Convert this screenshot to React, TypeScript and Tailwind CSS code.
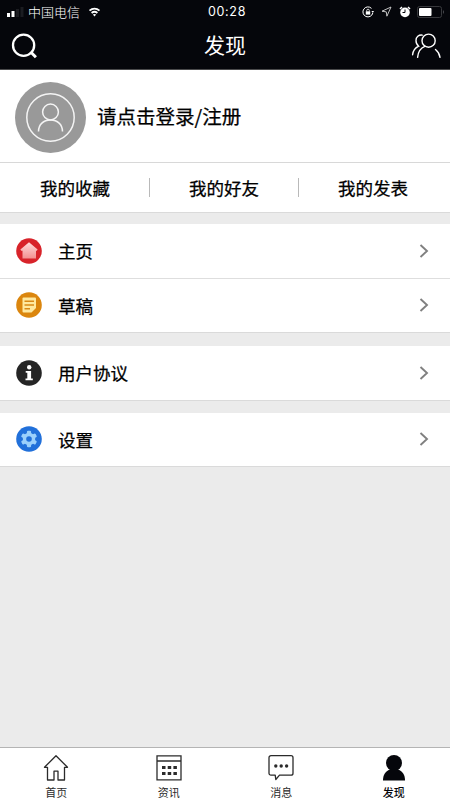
import type { ReactNode } from "react";

const shortcuts = ["我的收藏", "我的好友", "我的发表"];

const tabs = [
    { label: "首页", icon: <HomeIcon />, active: false },
    { label: "资讯", icon: <NewsIcon />, active: false },
    { label: "消息", icon: <MessageIcon />, active: false },
    { label: "发现", icon: <PersonIcon />, active: true },
];

export default function App() {
    return (
        <div className="flex h-screen w-full flex-col bg-[#ebebeb] font-['Noto_Sans_CJK_SC',sans-serif] text-black">
            <header className="h-[70px] shrink-0 border-b border-[#4a4a4c] bg-[#05060b] text-white">
                <StatusBar />
                <div className="flex h-[46px] items-center justify-between pr-[9px] pl-[11px]">
                    <svg className="h-[28px] w-[28px]" viewBox="0 0 28 28" fill="none" stroke="currentColor" strokeWidth="2.3">
                        <circle cx="12.6" cy="13.3" r="10.6" />
                        <path d="M19.500 19.800l5.400 5.400" strokeWidth="3" />
                    </svg>
                    <h1 className="pb-[3px] text-[21px] leading-none">发现</h1>
                    <svg className="h-[28px] w-[30px]" viewBox="0 0 30 28" fill="none" stroke="currentColor" strokeWidth="1.4" strokeLinecap="round">
                        <circle cx="17.600" cy="8.700" r="6.600" />
                        <path d="M11.300 3.100C7.700 2.700 5 5 5 8.400c0 2.500.9 4.400 2.700 5.800C4.500 15.700 2 18.800 1.600 22.800" />
                        <path d="M13.800 14.400C10 15.800 7.200 19.800 6.600 25.300" />
                        <path d="M24.500 17.500c2.300 1.800 4 4.700 4.500 7.800" />
                    </svg>
                </div>
            </header>

            <section className="border-b border-[#dadada] bg-white">
                <div className="flex h-[93px] items-center border-b border-[#d8d8d8] pt-[3px] pl-[15px]">
                    <svg className="h-[71px] w-[71px]" viewBox="0 0 71 71" fill="none" stroke="#f4f4f4" strokeWidth="1.500">
                        <circle cx="35.500" cy="35.500" r="35.500" fill="#999999" stroke="none" />
                        <circle cx="35.500" cy="35.500" r="23.700" />
                        <circle cx="35.500" cy="30" r="7.900" />
                        <path d="M23.500 49.500c0-7 5-11.500 12-11.500s12 4.500 12 11.500" />
                    </svg>
                    <span className="ml-[11px] pb-[4px] text-[19.500px] leading-none [-webkit-text-stroke:0.25px_black]">请点击登录/注册</span>
                </div>
                <div className="grid h-[49px] grid-cols-[149px_149px_149px] items-center">
                    {shortcuts.map((label) => (
                        <div
                            key={label}
                            className="flex h-[19px] items-center justify-center border-l border-[#b9b9b9] text-[17.500px] leading-none [-webkit-text-stroke:0.25px_black] first:border-transparent"
                        >
                            {label}
                        </div>
                    ))}
                </div>
            </section>

            <MenuGroup className="mt-[11px]">
                <MenuRow label="主页" icon={<RedHouse />} />
                <MenuRow label="草稿" icon={<DraftNote />} />
            </MenuGroup>
            <MenuGroup className="mt-[13px]">
                <MenuRow label="用户协议" icon={<InfoBadge />} />
            </MenuGroup>
            <MenuGroup className="mt-[12px]">
                <MenuRow label="设置" icon={<GearBadge />} />
            </MenuGroup>

            <nav className="mt-auto grid h-[53px] shrink-0 grid-cols-4 border-t border-[#b4b4b4] bg-white">
                {tabs.map((tab) => (
                    <div
                        key={tab.label}
                        className={`flex flex-col items-center pt-[6px] ${tab.active ? "font-medium text-[#05060b]" : "text-[#2b2b2b]"}`}
                    >
                        {tab.icon}
                        <span className="mt-[5px] text-[11px] leading-none">{tab.label}</span>
                    </div>
                ))}
            </nav>
        </div>
    );
}

function StatusBar() {
    return (
        <div className="grid h-[23px] grid-cols-3 items-center">
            <div className="flex items-center pl-[6px]">
                <svg className="h-[12px] w-[18px]" viewBox="0 0 18 12">
                    <path d="M1 7h3v4H1zM5.500 5h3v6h-3z" fill="#fff" />
                    <path d="M10 3h3v8h-3zM14.500 1h3v10h-3z" fill="#1b1c21" />
                </svg>
                <span className="ml-[4px] text-[13px] leading-none font-light">中国电信</span>
                <svg className="ml-[8px] h-[10px] w-[13px]" viewBox="0 0 13 10" fill="none" stroke="#fff" strokeWidth="1.800">
                    <path d="M1.500 3.700c3-2.700 7-2.700 10 0M3.600 6c1.800-1.500 4-1.500 5.800 0" />
                    <path d="M6.500 9.500l-1.700-1.900q1.700-1.200 3.400 0z" fill="#fff" stroke="none" />
                </svg>
            </div>
            <span className="pt-[2px] pl-[4px] text-center font-['Inter',sans-serif] text-[12.500px] leading-none tracking-[0.7px]">00:28</span>
            <div className="flex items-center justify-end pr-[5px]">
                <svg className="h-[12px] w-[12px]" viewBox="0 0 12 12" fill="none" stroke="#fff">
                    <path d="M10.800 7A5 5 0 1 1 9.500 2.400" />
                    <path d="M9.400 5h2.600l-1.100 2z" fill="#fff" stroke="none" />
                    <rect x="3.800" y="5.300" width="4.400" height="3.300" fill="#fff" stroke="none" />
                    <path d="M4.700 5.500V4.500a1.300 1.300 0 0 1 2.600 0v1" strokeWidth=".8" />
                </svg>
                <svg className="ml-[7px] h-[11px] w-[11px]" viewBox="0 0 11 11" fill="none" stroke="#d5d5d5" strokeWidth=".9">
                    <path d="M10 1L1 5.200l4.300.7.6 4.300z" />
                </svg>
                <svg className="ml-[7px] h-[12px] w-[12px]" viewBox="0 0 12 12">
                    <circle cx="6" cy="6.400" r="4.800" fill="#fff" />
                    <path d="M1 3l2-2M11 3L9 1" stroke="#fff" strokeWidth="1.500" />
                    <path d="M6 3.500v3H3.500" stroke="#05060b" strokeWidth="1" fill="none" />
                </svg>
                <svg className="ml-[6px] h-[12px] w-[28px]" viewBox="0 0 28 12">
                    <rect x=".5" y=".5" width="24" height="11" rx="2" fill="none" stroke="#38393d" />
                    <rect x="2" y="2" width="12.500" height="8" rx="1" fill="#fff" />
                    <path d="M26 4q2 2 0 4z" fill="#4b4c50" />
                </svg>
            </div>
        </div>
    );
}

function MenuGroup({ className, children }: { className: string; children: ReactNode }) {
    return <section className={`${className} divide-y divide-[#dedede] border-b border-[#dadada] bg-white`}>{children}</section>;
}

function MenuRow({ label, icon }: { label: string; icon: ReactNode }) {
    return (
        <div className="box-content flex h-[53.5px] items-center pr-[21px] pl-[16px]">
            {icon}
            <span className="ml-[16px] text-[17.500px] leading-none [-webkit-text-stroke:0.25px_black]">{label}</span>
            <svg className="ml-auto h-[14px] w-[10px]" viewBox="0 0 10 14" fill="none" stroke="#808080" strokeWidth="1.900">
                <path d="M1.500 1l6.500 6-6.500 6" />
            </svg>
        </div>
    );
}

function RedHouse() {
    return (
        <svg className="h-[26px] w-[26px]" viewBox="0 0 26 26">
            <defs>
                <linearGradient id="house" x1="0" y1="0" x2="0" y2="1">
                    <stop offset="0" stopColor="#ffdcdc" />
                    <stop offset="1" stopColor="#f39090" />
                </linearGradient>
            </defs>
            <circle cx="13" cy="13" r="12.800" fill="#d8232a" />
            <path d="M13 4.200l8.600 7.300-.8 1.300H20v7.700H6.500v-7.700h-1.300l-.8-1.300z" fill="url(#house)" />
        </svg>
    );
}

function DraftNote() {
    return (
        <svg className="h-[26px] w-[26px]" viewBox="0 0 26 26">
            <circle cx="13" cy="13" r="12.800" fill="#db860e" />
            <path d="M7.500 5.500h11.500a1 1 0 0 1 1 1v9.500l-4.500 4.500h-8a1 1 0 0 1-1-1v-13a1 1 0 0 1 1-1z" fill="#ffe9a0" />
            <path d="M8.500 9.200H18M8.500 13H18M8.500 16.800h5.500" stroke="#d98a18" strokeWidth="1.500" />
        </svg>
    );
}

function InfoBadge() {
    return (
        <svg className="h-[26px] w-[26px]" viewBox="0 0 26 26">
            <circle cx="13" cy="13" r="12.800" fill="#252525" />
            <circle cx="13.200" cy="7.200" r="2.200" fill="#fff" />
            <path d="M9.700 11h5.400v7.600h1.700v1.700H9.500v-1.700h1.800v-5.900H9.700z" fill="#fff" />
        </svg>
    );
}

function GearBadge() {
    return (
        <svg className="h-[26px] w-[26px]" viewBox="0 0 26 26">
            <circle cx="13" cy="13" r="12.800" fill="#2170da" />
            <g fill="#9bd0fb">
                <circle cx="13" cy="13" r="6.200" />
                <rect x="10.900" y="4.800" width="4.200" height="16.400" rx="1.200" />
                <rect x="10.900" y="4.800" width="4.200" height="16.400" rx="1.200" transform="rotate(60 13 13)" />
                <rect x="10.900" y="4.800" width="4.200" height="16.400" rx="1.200" transform="rotate(120 13 13)" />
            </g>
            <circle cx="13" cy="13" r="2.800" fill="#2170da" />
        </svg>
    );
}

function HomeIcon() {
    return (
        <svg className="h-[28px] w-[26px]" viewBox="0 0 26 28" fill="none" stroke="currentColor" strokeWidth="1.300" strokeLinejoin="round">
            <path d="M13 1.700L1.500 13.300h3v12.700H11v-8.800h4v8.800h6.500V13.300h3z" />
        </svg>
    );
}

function NewsIcon() {
    return (
        <svg className="h-[28px] w-[26px]" viewBox="0 0 26 28" fill="none" stroke="currentColor" strokeWidth="1.300">
            <path d="M1 1.800h24v24H1zM1 7h24" />
            <path d="M6 13.500h15M6 19.500h15" strokeWidth="3" strokeDasharray="3.500 2.200" />
        </svg>
    );
}

function MessageIcon() {
    return (
        <svg className="h-[28px] w-[26px]" viewBox="0 0 26 28" fill="none" stroke="currentColor" strokeWidth="1.300" strokeLinejoin="round">
            <path d="M3 1.700h20a2 2 0 0 1 2 2v15.500a2 2 0 0 1-2 2H11.500L7.800 25.500l-.6-4.300H3a2 2 0 0 1-2-2V3.700a2 2 0 0 1 2-2z" />
            <g fill="currentColor" stroke="none">
                <circle cx="7.800" cy="12" r="1.700" />
                <circle cx="13.200" cy="12" r="1.700" />
                <circle cx="18.600" cy="12" r="1.700" />
            </g>
        </svg>
    );
}

function PersonIcon() {
    return (
        <svg className="h-[28px] w-[26px]" viewBox="0 0 26 28" fill="currentColor">
            <circle cx="13" cy="9" r="8" />
            <path d="M9 15.500h8c5 2 7 5.500 7 11H2c0-5.500 2-9 7-11z" />
        </svg>
    );
}
